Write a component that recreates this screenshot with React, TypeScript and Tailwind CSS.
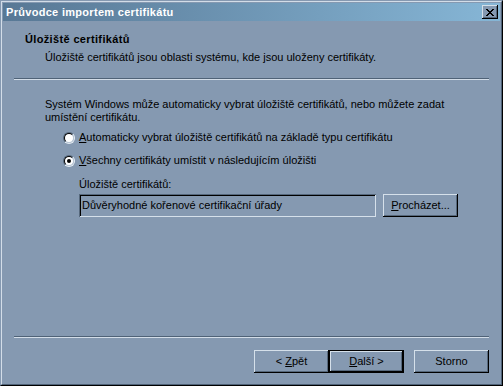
function Radio({ checked }: { checked?: boolean }) {
    return (
        <span className="relative inline-block h-[12px] w-[12px] shrink-0 rounded-full border border-t-[#56687c] border-l-[#56687c] border-b-[#e6edf4] border-r-[#e6edf4]">
            <span className="flex h-full w-full items-center justify-center rounded-full border border-t-black border-l-black border-b-[#b7c5d4] border-r-[#b7c5d4] bg-white">
                {checked && <span className="h-[4px] w-[4px] rounded-full bg-black" />}
            </span>
        </span>
    );
}

function Button({ children, isDefault }: { children: React.ReactNode; isDefault?: boolean }) {
    return (
        <div
            className={
                isDefault
                    ? "flex h-[23px] w-[75px] items-center justify-center border border-black bg-[#8599b1] shadow-[inset_-1px_-1px_0_#000,inset_1px_1px_0_#d5e0ea,inset_-2px_-2px_0_#56687c]"
                    : "flex h-[23px] w-[75px] items-center justify-center bg-[#8599b1] shadow-[inset_-1px_-1px_0_#000,inset_1px_1px_0_#d5e0ea,inset_-2px_-2px_0_#56687c]"
            }
        >
            {children}
        </div>
    );
}

function Separator() {
    return (
        <div className="mx-[11px]">
            <div className="h-px bg-[#4f6277]" />
            <div className="h-px bg-[#d3dde8]" />
        </div>
    );
}

export default function App() {
    return (
        <div className="h-[386px] w-[503px] bg-[#8599b1] font-['Liberation_Sans',Arial,sans-serif] text-[11px] leading-[13px] text-black">
            <div className="flex h-full w-full flex-col border-t border-l border-t-[#8599b1] border-l-[#8599b1] border-b border-r border-b-black border-r-black">
                <div className="flex h-full w-full flex-col border-t border-l border-t-[#d3dde8] border-l-[#d3dde8] border-b border-r border-b-[#4f6277] border-r-[#4f6277] p-px">
                    {/* title bar */}
                    <div className="flex h-[18px] items-center justify-between bg-gradient-to-r from-[#587895] to-[#86b6d6] pl-[3px] pr-[2px]">
                        <span className="font-bold tracking-[0.3px] text-white">Průvodce importem certifikátu</span>
                        <div className="flex h-[14px] w-[16px] items-center justify-center bg-[#8599b1] shadow-[inset_-1px_-1px_0_#000,inset_1px_1px_0_#d5e0ea,inset_-2px_-2px_0_#56687c]">
                            <svg width="8" height="7" viewBox="0 0 8 7" shapeRendering="crispEdges">
                                <path d="M0 0h2v1h-2zM6 0h2v1h-2zM1 1h2v1h-2zM5 1h2v1h-2zM2 2h4v1h-4zM3 3h2v1h-2zM2 4h4v1h-4zM1 5h2v1h-2zM5 5h2v1h-2zM0 6h2v1h-2zM6 6h2v1h-2z" fill="#000" />
                            </svg>
                        </div>
                    </div>

                    {/* header */}
                    <div className="h-[57px] pl-[22px] pt-[12px]">
                        <div className="font-bold tracking-[0.35px]">Úložiště certifikátů</div>
                        <div className="mt-[5px] pl-[20px]">
                            Úložiště certifikátů jsou oblasti systému, kde jsou uloženy certifikáty.
                        </div>
                    </div>
                    <Separator />

                    {/* body */}
                    <div className="flex-1 pl-[42px] pr-[11px] pt-[18px]">
                        <p>
                            Systém Windows může automaticky vybrat úložiště certifikátů, nebo můžete zadat
                            <br />
                            umístění certifikátu.
                        </p>
                        <div className="mt-[7px] flex items-center gap-[4px] pl-[18px]">
                            <Radio />
                            <span>
                                <u>A</u>utomaticky vybrat úložiště certifikátů na základě typu certifikátu
                            </span>
                        </div>
                        <div className="mt-[10px] flex items-center gap-[4px] pl-[18px]">
                            <Radio checked />
                            <span>
                                <u>V</u>šechny certifikáty umístit v následujícím úložišti
                            </span>
                        </div>
                        <div className="mt-[11px] pl-[34px]">Úložiště certifikátů:</div>
                        <div className="mt-[3px] flex items-center gap-[7px] pl-[34px]">
                            <div className="flex h-[23px] w-[297px] items-center pl-[3px] shadow-[inset_1px_1px_0_#56687c,inset_-1px_-1px_0_#d5e0ea,inset_2px_2px_0_#000]">
                                Důvěryhodné kořenové certifikační úřady
                            </div>
                            <Button>
                                <span>
                                    <u>P</u>rocházet...
                                </span>
                            </Button>
                        </div>
                    </div>

                    <Separator />
                    <div className="flex justify-end pb-[10px] pr-[11px] pt-[12px]">
                        <Button>
                            <span>
                                &lt; <u>Z</u>pět
                            </span>
                        </Button>
                        <Button isDefault>
                            <span>
                                <u>D</u>alší &gt;
                            </span>
                        </Button>
                        <div className="w-[10px]" />
                        <Button>
                            <span>Storno</span>
                        </Button>
                    </div>
                </div>
            </div>
        </div>
    );
}
